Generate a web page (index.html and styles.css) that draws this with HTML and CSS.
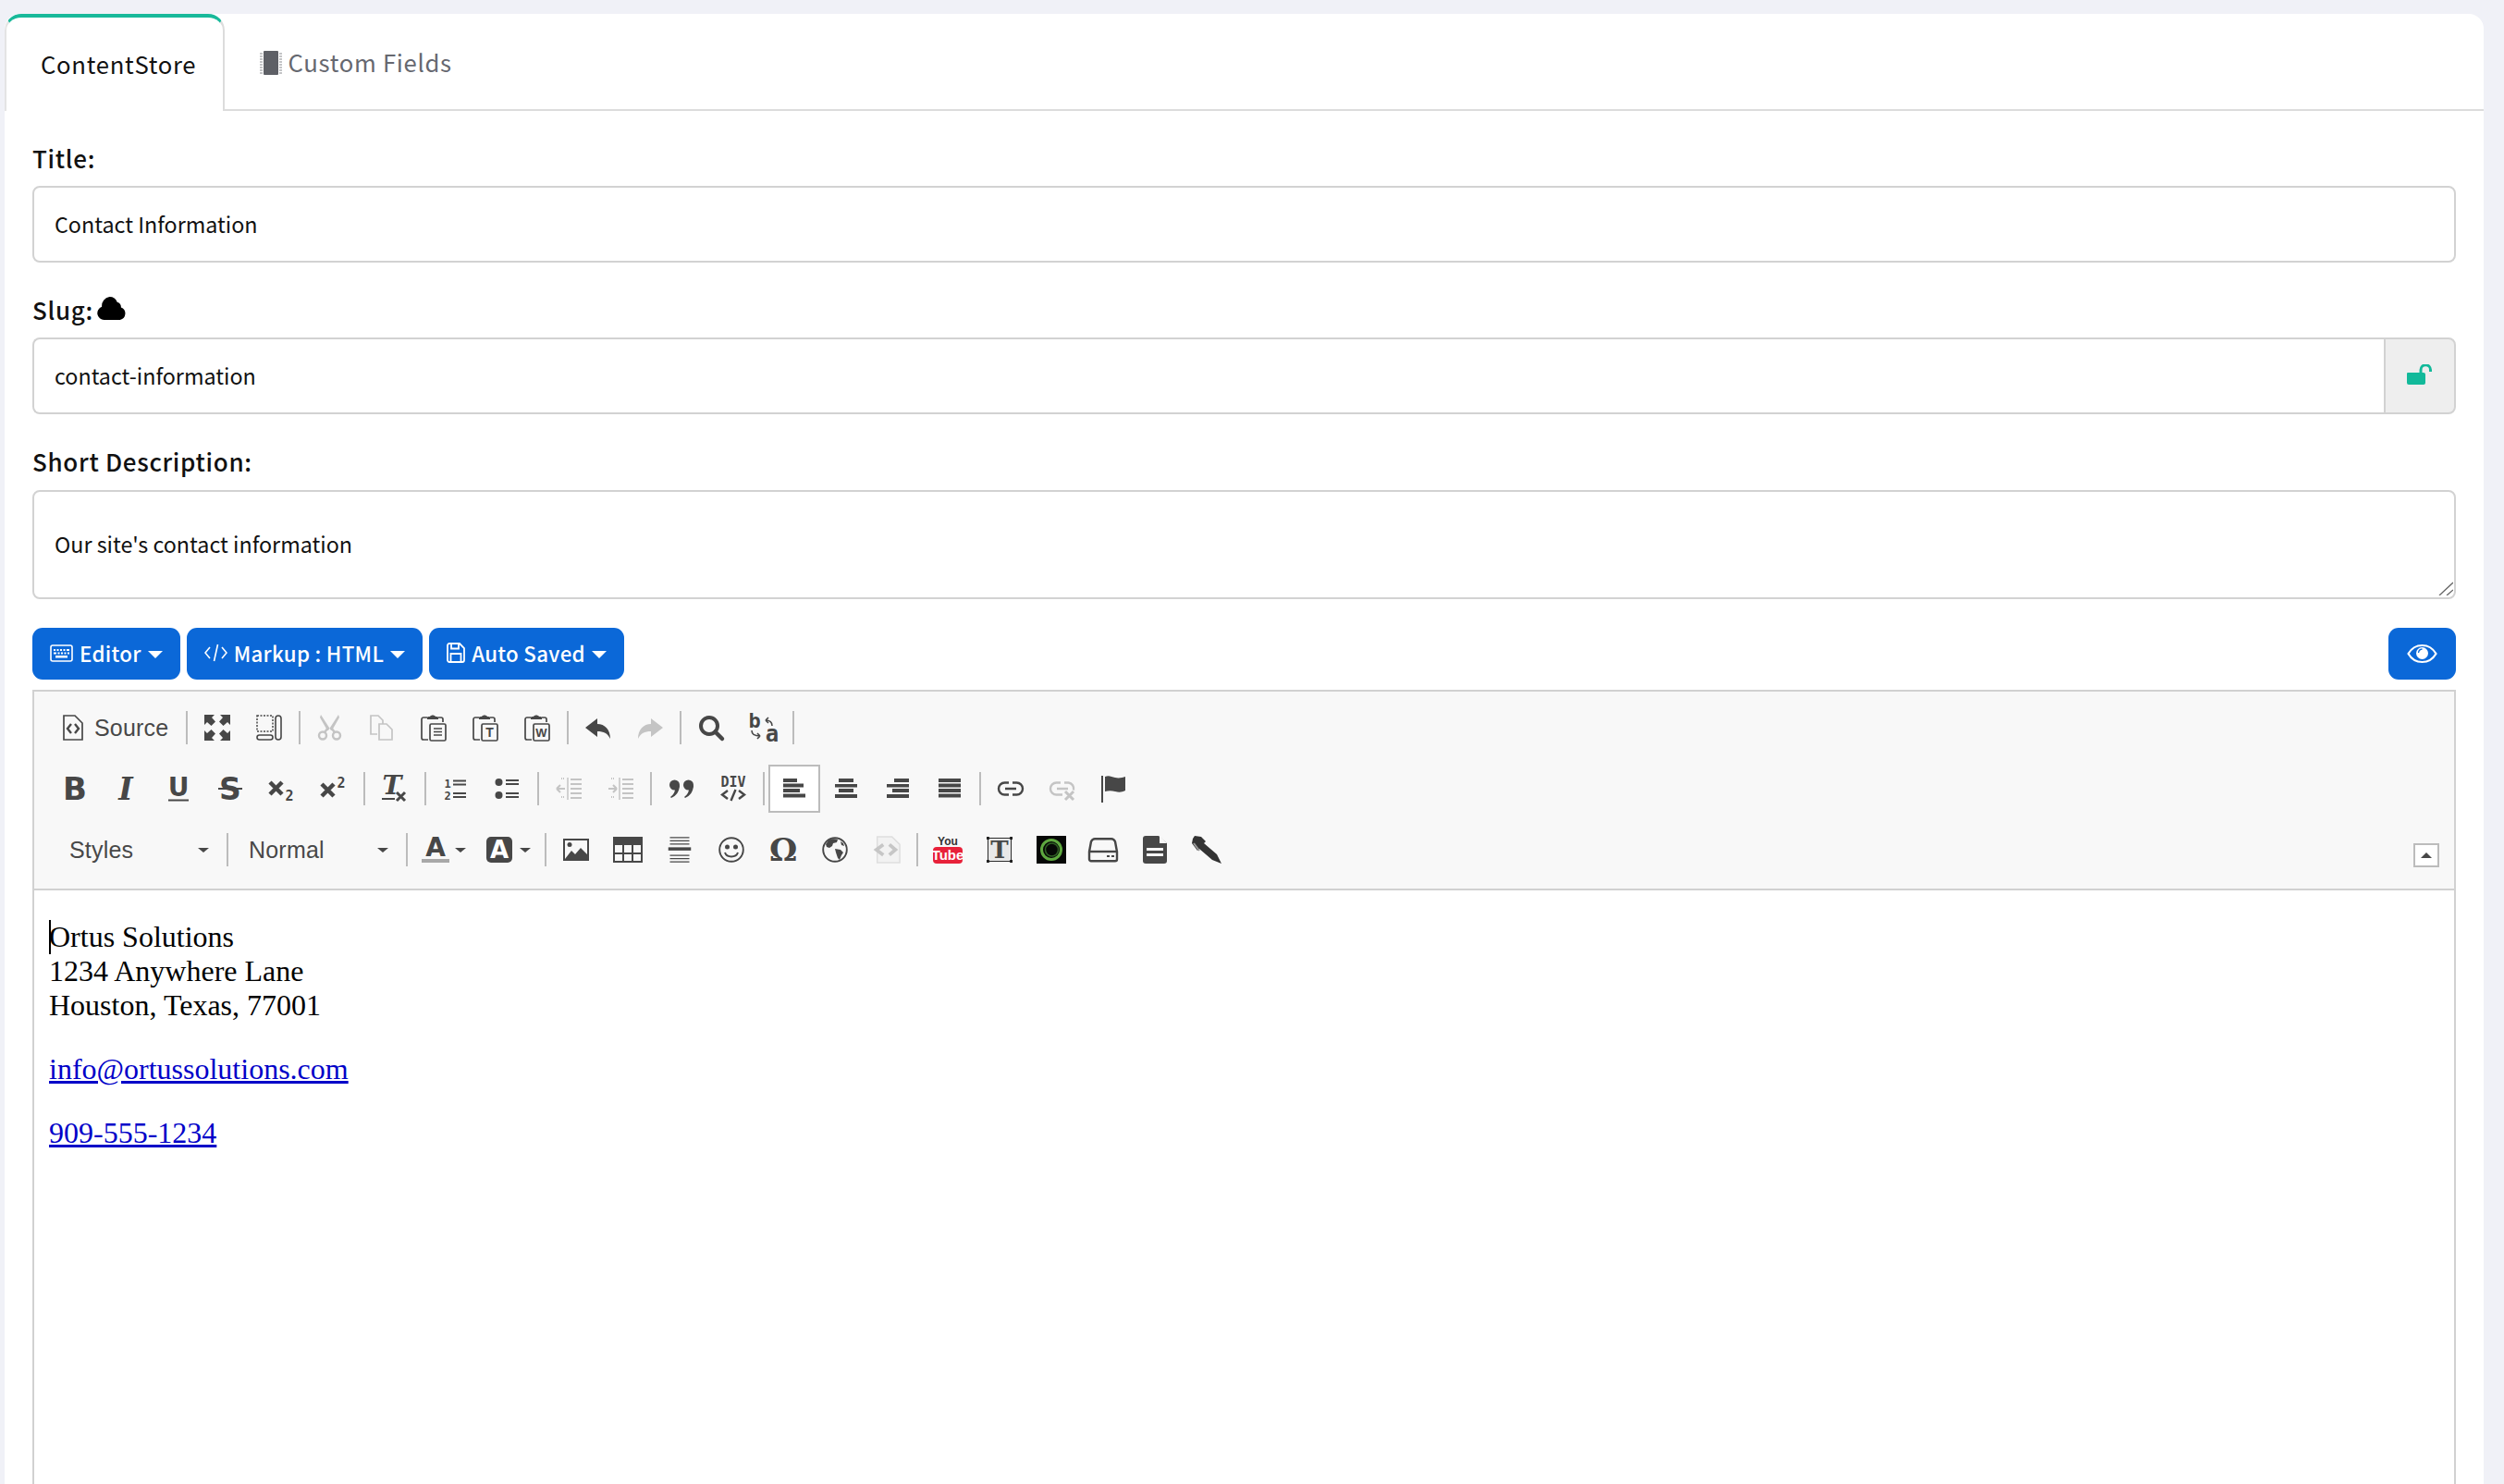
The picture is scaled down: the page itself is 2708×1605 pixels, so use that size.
FILE: index.html
```html
<!DOCTYPE html>
<html lang="en">
<head>
<meta charset="UTF-8">
<title>ContentStore - Contact Information</title>
<link rel="stylesheet" href="styles.css">
</head>
<body>
<div class="card">
  <div class="tabs">
    <a class="tab active">ContentStore</a>
    <a class="tab">
      <svg class="chip" viewBox="0 0 24 26"><path d="M4 1a1 1 0 0 1 1-1h14a1 1 0 0 1 1 1v24a1 1 0 0 1-1 1H5a1 1 0 0 1-1-1z"/><path d="M0 3h3M0 6h3M0 9h3M0 12h3M0 15h3M0 18h3M0 21h3M0 24h3M21 3h3M21 6h3M21 9h3M21 12h3M21 15h3M21 18h3M21 21h3M21 24h3" stroke="#8a8b90" stroke-width="1.200"/></svg>
      Custom Fields
    </a>
  </div>

  <div class="form">
    <label class="field-label">Title:</label>
    <input class="field" value="Contact Information">

    <label class="field-label">Slug:
      <svg class="cloud" viewBox="0 0 30 24"><path d="M7 24a7 7 0 0 1-2.400-13.600A9.500 9.500 0 0 1 12.500 0a8.500 8.500 0 0 1 8 5.500 5.500 5.500 0 0 1 4 5.500A6.800 6.800 0 0 1 23.500 24z"/></svg>
    </label>
    <div class="input-group">
      <input class="field" value="contact-information">
      <span class="addon">
        <svg viewBox="0 0 28 22"><path d="M1 9h17a2 2 0 0 1 2 2v9a2 2 0 0 1-2 2H2a2 2 0 0 1-2-2V10a1 1 0 0 1 1-1z"/><path d="M15 10V6a5 5 0 0 1 10.500 0v2" fill="none" stroke="currentColor" stroke-width="3"/></svg>
      </span>
    </div>

    <label class="field-label">Short Description:</label>
    <div class="area-wrap">
      <textarea class="field area">Our site's contact information</textarea>
      <svg class="grip" viewBox="0 0 16 15"><path d="M1 15L16 1M9 15l7-6" stroke="#666" stroke-width="1.300"/></svg>
    </div>

    <div class="btn-row">
      <a class="btn">
        <svg width="25" height="19" viewBox="0 0 25 19"><rect x="1" y="1" width="23" height="17" rx="2" fill="none" stroke="#fff" stroke-width="1.600"/><path d="M4 5h2v2H4zM7.500 5h2v2h-2zM11 5h2v2h-2zM14.500 5h2v2h-2zM18 5h3v2h-3zM4 8.500h3v2H4zM8.500 8.500h2v2h-2zM12 8.500h2v2h-2zM15.500 8.500h2v2h-2zM19 8.500h2v2h-2zM6 12h13v2.500H6z" fill="#fff"/></svg>
        Editor <i class="caret-down"></i>
      </a>
      <a class="btn">
        <svg width="25" height="20" viewBox="0 0 25 20"><path d="M6 4l-5 6 5 6M19 4l5 6-5 6M14.500 1l-4 18" fill="none" stroke="#fff" stroke-width="1.600"/></svg>
        Markup : HTML <i class="caret-down"></i>
      </a>
      <a class="btn">
        <svg width="20" height="22" viewBox="0 0 20 22"><path d="M1 3a2 2 0 0 1 2-2h11l5 5v13a2 2 0 0 1-2 2H3a2 2 0 0 1-2-2zM5 1.500v5h8v-5M4.500 21v-9h11v9" fill="none" stroke="#fff" stroke-width="1.800"/></svg>
        Auto Saved <i class="caret-down"></i>
      </a>
      <a class="btn btn-eye">
        <svg width="33" height="22" viewBox="0 0 33 22"><path d="M1.500 11C5 5 10 2 16.500 2S28 5 31.500 11C28 17 23 20 16.500 20S5 17 1.500 11z" fill="none" stroke="#fff" stroke-width="2.200"/><circle cx="16.500" cy="10.500" r="6.500" fill="#fff"/><path d="M12.500 10a4.500 4.500 0 0 1 4-4" fill="none" stroke="#0b68d8" stroke-width="1.300"/></svg>
      </a>
    </div>

    <div class="editor">
      <div class="toolbar">
        <div class="tool-row">
          <a class="tool tool-source">
            <svg width="22" height="28" viewBox="0 0 22 28"><path d="M1 1h12l8 8v18H1z" fill="none" stroke="#474747" stroke-width="1.700"/><path d="M9 10l-4 5 4 5M13 10l4 5-4 5" fill="none" stroke="#474747" stroke-width="2.400"/></svg>
            <span>Source</span>
          </a>
          <i class="sep"></i>
          <a class="tool"><svg class="ic" viewBox="0 0 28 28"><path d="M0 0h11L8 3l4 4.500L7.500 12 3 8l-3 3zM28 0H17l3 3-4 4.500 4.500 4.500L25 8l3 3zM0 28h11l-3-3 4-4.500L7.500 16 3 20l-3-3zM28 28H17l3-3-4-4.500 4.500-4.500L25 20l3-3z"/></svg></a>
          <a class="tool"><svg class="ic" viewBox="0 0 28 28"><path d="M1 1h17v17H1z" fill="none" stroke="currentColor" stroke-width="1.500" stroke-dasharray="2 1.500"/><rect x="1" y="22" width="17" height="5" rx="2.500" fill="none" stroke="currentColor" stroke-width="1.600"/><rect x="21" y="1" width="6" height="26" rx="3" fill="none" stroke="currentColor" stroke-width="1.600"/></svg></a>
          <i class="sep"></i>
          <a class="tool off"><svg class="ic" viewBox="0 0 28 28"><path d="M4 0l11 17h-4L3 3zM23 0L12 17h4L24 3z"/><circle cx="6" cy="22.500" r="4" fill="none" stroke="currentColor" stroke-width="2.400"/><circle cx="21" cy="22.500" r="4" fill="none" stroke="currentColor" stroke-width="2.400"/><path d="M8 19l4-5M19 19l-4-5" stroke="currentColor" stroke-width="2.400"/></svg></a>
          <a class="tool off"><svg class="ic" viewBox="0 0 28 28"><path d="M9 21H2V1h8l5 5v4M11 10h8l6 6v11H11z" fill="none" stroke="currentColor" stroke-width="1.700"/></svg></a>
          <a class="tool"><svg class="ic" viewBox="0 0 28 28"><use href="#clip"/><path d="M14 15h9M14 18.500h9M14 22h9" stroke="currentColor" stroke-width="1.500"/></svg></a>
          <a class="tool"><svg class="ic" viewBox="0 0 28 28"><use href="#clip"/><text x="18.500" y="24" class="ic-text" font-size="14">T</text></svg></a>
          <a class="tool"><svg class="ic" viewBox="0 0 28 28"><use href="#clip"/><text x="18.500" y="24" class="ic-text" font-size="13">W</text></svg></a>
          <i class="sep"></i>
          <a class="tool"><svg class="ic" viewBox="0 0 28 28"><path d="M0 14L13 4v6c8 0 14 6 14 16-3-6-7-8-14-8v6z"/></svg></a>
          <a class="tool off"><svg class="ic" viewBox="0 0 28 28"><path d="M28 14L15 4v6C7 10 1 16 1 26c3-6 7-8 14-8v6z"/></svg></a>
          <i class="sep"></i>
          <a class="tool"><svg class="ic" viewBox="0 0 28 28"><circle cx="12" cy="12" r="9" fill="none" stroke="currentColor" stroke-width="4"/><path d="M18.500 18.500L26 26" stroke="currentColor" stroke-width="4.500" stroke-linecap="round"/></svg></a>
          <a class="tool"><svg class="ic" viewBox="0 0 28 28"><text x="5" y="14" class="ic-mono" font-size="22">b</text><text x="24" y="29" class="ic-mono" font-size="24">a</text><path d="M24 12c0-4-2-6-7-6M17 6l3-3M17 6l3 3M2 17c0 4 2 6 9 6M11 23l-3-3M11 23l-3 3" fill="none" stroke="currentColor" stroke-width="1.600"/></svg></a>
          <i class="sep"></i>
        </div>

        <div class="tool-row">
          <a class="tool"><svg class="ic" viewBox="0 0 28 28"><text x="14" y="26" class="ic-bold" font-size="34">B</text></svg></a>
          <a class="tool"><svg class="ic" viewBox="0 0 28 28"><text x="13" y="26" class="ic-serif" font-size="33">I</text></svg></a>
          <a class="tool"><svg class="ic" viewBox="0 0 28 28"><text x="14" y="22" class="ic-bold" font-size="28">U</text><path d="M3 26.500h22" stroke="currentColor" stroke-width="2"/></svg></a>
          <a class="tool"><svg class="ic" viewBox="0 0 28 28"><text x="14" y="26" class="ic-bold" font-size="33">S</text><path d="M1 14h26" stroke="currentColor" stroke-width="2"/></svg></a>
          <a class="tool"><svg class="ic" viewBox="0 0 28 28"><path d="M1 7l13 13M14 7L1 20" stroke="currentColor" stroke-width="4.500"/><text x="22" y="27" class="ic-mono" font-size="15">2</text></svg></a>
          <a class="tool"><svg class="ic" viewBox="0 0 28 28"><path d="M1 9l13 13M14 9L1 22" stroke="currentColor" stroke-width="4.500"/><text x="22" y="13" class="ic-mono" font-size="15">2</text></svg></a>
          <i class="sep"></i>
          <a class="tool"><svg class="ic" viewBox="0 0 28 28"><text x="11" y="20" class="ic-serif" font-size="28">T</text><path d="M0 25h14" stroke="currentColor" stroke-width="2"/><path d="M16 18l9 9M25 18l-9 9" stroke="currentColor" stroke-width="3"/></svg></a>
          <i class="sep"></i>
          <a class="tool"><svg class="ic" viewBox="0 0 28 28"><text x="5" y="13" class="ic-mono" font-size="12">1</text><text x="5" y="26" class="ic-mono" font-size="12">2</text><path d="M11 5.500h14M11 9.500h14M11 19h14M11 23h14" stroke="currentColor" stroke-width="2"/></svg></a>
          <a class="tool"><svg class="ic" viewBox="0 0 28 28"><circle cx="4.500" cy="7" r="4"/><circle cx="4.500" cy="21" r="4"/><path d="M12 5h14M12 9h14M12 19h14M12 23h14" stroke="currentColor" stroke-width="2"/></svg></a>
          <i class="sep"></i>
          <a class="tool off"><svg class="ic" viewBox="0 0 28 28"><path d="M16 4h12M16 9h12M16 14h12M16 19h12M16 24h12M1 14h9M1 14l4-4M1 14l4 4" fill="none" stroke="currentColor" stroke-width="2"/><path d="M13 2v24" stroke="currentColor" stroke-width="1.500"/><path d="M6 3h3M6 23h3" stroke="currentColor" stroke-width="2" stroke-dasharray="1 1"/></svg></a>
          <a class="tool off"><svg class="ic" viewBox="0 0 28 28"><path d="M16 4h12M16 9h12M16 14h12M16 19h12M16 24h12M1 14h9M10 14l-4-4M10 14l-4 4" fill="none" stroke="currentColor" stroke-width="2"/><path d="M13 2v24" stroke="currentColor" stroke-width="1.500"/><path d="M4 3h3M4 23h3" stroke="currentColor" stroke-width="2" stroke-dasharray="1 1"/></svg></a>
          <i class="sep"></i>
          <a class="tool"><svg class="ic" viewBox="0 0 28 28"><circle cx="6.500" cy="10" r="5.500"/><path d="M12 10c0 7-4 12-9 14l-1-1c4-3 5-6 5-9z"/><circle cx="21.500" cy="10" r="5.500"/><path d="M27 10c0 7-4 12-9 14l-1-1c4-3 5-6 5-9z"/></svg></a>
          <a class="tool"><svg class="ic" viewBox="0 0 28 28"><text x="14" y="12" class="ic-mono" font-size="15">DIV</text><path d="M8 16l-6 4.500 6 4.500M20 16l6 4.500-6 4.500M16.500 15l-5 12" fill="none" stroke="currentColor" stroke-width="2.400"/></svg></a>
          <i class="sep"></i>
          <a class="tool tool-on"><svg class="ic" viewBox="0 0 28 28"><path d="M2 3h15v4H2zM2 8.500h22v4H2zM2 14h18v4H2zM2 19.500h24v4H2z"/></svg></a>
          <a class="tool"><svg class="ic" viewBox="0 0 28 28"><path d="M6 3h16v4H6zM2 9h24v3.500H2zM6 14h16v4H6zM2 20h24v4H2z"/></svg></a>
          <a class="tool"><svg class="ic" viewBox="0 0 28 28"><path d="M10 3h16v4H10zM2 9h24v3.500H2zM8 14h18v4H8zM2 20h24v4H2z"/></svg></a>
          <a class="tool"><svg class="ic" viewBox="0 0 28 28"><path d="M2 3h24v4H2zM2 8.500h24v4H2zM2 14h24v4H2zM2 19.500h24v4H2z"/></svg></a>
          <i class="sep"></i>
          <a class="tool"><svg class="ic" viewBox="0 0 28 28"><path d="M12 7.500H7.500a6.500 6.500 0 0 0 0 13H12M16 7.500h4.500a6.500 6.500 0 0 1 0 13H16M8 14h12" fill="none" stroke="currentColor" stroke-width="2.400"/></svg></a>
          <a class="tool off"><svg class="ic" viewBox="0 0 28 28"><path d="M12 7.500H7.500a6.500 6.500 0 0 0 0 13H14M16 7.500h4.500a6.500 6.500 0 0 1 5.500 8M8 14h12" fill="none" stroke="currentColor" stroke-width="2.400"/><path d="M17 17l9 9M26 17l-9 9" stroke="currentColor" stroke-width="3"/></svg></a>
          <a class="tool"><svg class="ic" viewBox="0 0 28 28"><path d="M1 0v29" stroke="currentColor" stroke-width="2"/><path d="M4 1c4-2 7 0 11 1s8 0 11-1v15c-4 2-7 2-11 1s-7-1-11 0z"/></svg></a>
        </div>

        <div class="tool-row">
          <a class="combo combo-styles"><span>Styles</span><i class="arrow"></i></a>
          <i class="sep"></i>
          <a class="combo combo-format"><span>Normal</span><i class="arrow"></i></a>
          <i class="sep"></i>
          <a class="tool tool-color"><svg class="ic" viewBox="0 0 30 28"><text x="15" y="21" class="ic-bold" font-size="28">A</text><rect y="24" width="30" height="4" fill="#a8a8a8"/></svg><i class="arrow"></i></a>
          <a class="tool tool-color tool-bg"><svg class="ic" viewBox="0 0 28 28"><rect width="28" height="28" rx="5"/><text x="14" y="23" class="ic-bold ic-white" font-size="26">A</text></svg><i class="arrow"></i></a>
          <i class="sep"></i>
          <a class="tool"><svg class="ic" viewBox="0 0 28 24"><rect x="1" y="1" width="26" height="22" fill="none" stroke="currentColor" stroke-width="2"/><circle cx="7" cy="6.500" r="2.500"/><path d="M2 22l7-9 4 4 6-7 7 7v5z"/></svg></a>
          <a class="tool"><svg class="ic tall" viewBox="0 0 32 28"><path d="M0 0h32v28H0zM2 9v8h8V9zm10 0v8h8V9zm10 0v8h8V9zM2 19v7h8v-7zm10 0v7h8v-7zm10 0v7h8v-7z" fill-rule="evenodd"/></svg></a>
          <a class="tool"><svg class="ic" viewBox="0 0 28 32"><path d="M2 1h24M2 5h24M2 9h24M2 23h24M2 27h24M2 31h24" stroke="currentColor" stroke-width="1.700"/><path d="M0 13h28v4H0z"/></svg></a>
          <a class="tool"><svg class="ic" viewBox="0 0 28 28"><circle cx="14" cy="14" r="12.800" fill="none" stroke="currentColor" stroke-width="1.900"/><circle cx="9.500" cy="11" r="2.500"/><circle cx="18.500" cy="11" r="2.500"/><path d="M7 17c2 6 12 6 14 0" fill="none" stroke="currentColor" stroke-width="2"/></svg></a>
          <a class="tool"><svg class="ic" viewBox="0 0 28 28"><text x="14" y="26" class="ic-serif ic-omega" font-size="34">Ω</text></svg></a>
          <a class="tool"><svg class="ic" viewBox="0 0 28 28"><circle cx="14" cy="14" r="12.800" fill="none" stroke="currentColor" stroke-width="1.900"/><path d="M7 4c3-2 7-2 10-1l-1 3-4 1-1 3-3 2-3-1-1-3zM14 13l6 1 3 3-2 3-2 5-2-2-2-6z"/><path d="M20 5l3 2 1 3-3-1z"/></svg></a>
          <a class="tool"><svg class="ic tall" viewBox="0 0 32 32"><path d="M5 1h17l9 9v21H5z" fill="#f2f2f2" stroke="#dedede" stroke-width="1.600"/><path d="M12 10l-8 6 8 6M19 10l7 6-7 6" fill="none" stroke="#c6c6c6" stroke-width="4"/></svg></a>
          <i class="sep"></i>
          <a class="tool"><svg class="ic tall" viewBox="0 0 32 30"><rect y="12" width="32" height="18" rx="4" fill="#e8213a"/><text x="16" y="10" class="ic-bold ic-yt" font-size="12">You</text><text x="16" y="26" class="ic-bold ic-white ic-yt" font-size="15">Tube</text></svg></a>
          <a class="tool"><svg class="ic" viewBox="0 0 29 29"><rect x="1.500" y="1.500" width="26" height="26" fill="#e8e8e8" stroke="#222" stroke-width="1"/><path d="M0 0h3v3H0zM26 0h3v3h-3zM0 26h3v3H0zM26 26h3v3h-3z" fill="#222"/><text x="14.500" y="24" class="ic-serif ic-upright" font-size="27" fill="#111">T</text></svg></a>
          <a class="tool"><svg class="ic tall" viewBox="0 0 32 30"><rect width="32" height="30" fill="#060806"/><circle cx="16" cy="15" r="10.500" fill="none" stroke="#5ea83f" stroke-width="3"/><circle cx="16.500" cy="15" r="7" fill="none" stroke="#2f5f24" stroke-width="1.500"/></svg></a>
          <a class="tool"><svg class="ic tall" viewBox="0 0 32 26"><path d="M7 1.200h18c2 0 3 1 4 3l2 11v8a2 2 0 0 1-2 2H3a2 2 0 0 1-2-2v-8L3 4.200c1-2 2-3 4-3z" fill="none" stroke="currentColor" stroke-width="2.400"/><path d="M1 15h30" stroke="currentColor" stroke-width="2.400"/><path d="M20 19h3v2h-3zM25 19h3v2h-3z"/></svg></a>
          <a class="tool"><svg class="ic tall-doc" viewBox="0 0 26 30"><path d="M3 0h14l9 8v19a3 3 0 0 1-3 3H3a3 3 0 0 1-3-3V3a3 3 0 0 1 3-3z"/><path d="M4 13h18v3H4zM4 19h18v3H4z" fill="#f7f7f7"/><path d="M18 0l8 8h-8z" fill="#f7f7f7"/></svg></a>
          <a class="tool"><svg class="ic tall" viewBox="0 0 32 30"><path d="M3 0l7 1 5 5-2 2 14 12 5 10-10-4L8 14l-2 2-6-8 1-5z" fill="#333"/><path d="M2 8l6 8" stroke="#999" stroke-width="2"/></svg></a>
        </div>

        <a class="collapser"><i></i></a>
      </div>

      <div class="content">
        <p><i class="text-caret"></i>Ortus Solutions<br>1234 Anywhere Lane<br>Houston, Texas, 77001</p>
        <p><a href="#">info@ortussolutions.com</a></p>
        <p><a href="#">909-555-1234</a></p>
      </div>
    </div>
  </div>
</div>

<svg class="defs" width="0" height="0">
  <defs>
    <g id="clip">
      <path d="M7 3H3a2 2 0 0 0-2 2v20a2 2 0 0 0 2 2h5M19 3h3a2 2 0 0 1 2 2v3" fill="none" stroke="currentColor" stroke-width="1.700"/>
      <path d="M7 5V3c0-1 1-1 3-1 1-2 5-2 6 0 2 0 3 0 3 1v2z"/>
      <rect x="10" y="10" width="17" height="18" rx="1.500" fill="none" stroke="currentColor" stroke-width="1.700"/>
    </g>
  </defs>
</svg>
</body>
</html>
```

FILE: styles.css
```css
html, body {
    margin: 0;
    padding: 0;
    height: 1605px;
    overflow: hidden;
}
body {
    background-color: #f0f1f7;
    font-family: "Noto Sans CJK SC", "Noto Sans", sans-serif;
    color: #111;
}
.defs {
    position: absolute;
}

/* card + tabs */
.card {
    margin: 15px 22px 0 5px;
    height: 1590px;
    background-color: #fff;
    border-radius: 16px 16px 0 0;
    overflow: hidden;
}
.tabs {
    display: flex;
    height: 105px;
    box-sizing: border-box;
    border-bottom: 2px solid #dcdcdc;
}
.tab {
    width: 243px;
    box-sizing: border-box;
    padding: 30px 0 0 38px;
    font-size: 25.700px;
    letter-spacing: 0.7px;
    color: #666870;
    white-space: nowrap;
    line-height: 44px;
}
.tab.active {
    width: 238px;
    height: 105px;
    margin-left: 0;
    padding: 28px 0 0 37px;
    background-color: #fff;
    color: #111;
    border-top: 4px solid #18b99a;
    border-right: 2px solid #dcdcdc;
    border-left: 2px solid #e4e4e4;
    border-radius: 18px 18px 0 0;
}
.chip {
    width: 24px;
    height: 26px;
    fill: #5e6066;
    vertical-align: -3px;
    margin-right: 0;
}

/* form */
.form {
    padding: 33px 30px 0 30px;
}
.field-label {
    display: block;
    height: 36px;
    line-height: 36px;
    margin-bottom: 12px;
    font-size: 26px;
    font-weight: 500;
    letter-spacing: 0.7px;
    color: #111;
}
.cloud {
    width: 32px;
    height: 25px;
    margin-left: -3px;
    fill: #000;
    vertical-align: 0;
}
.field {
    display: block;
    width: 100%;
    height: 83px;
    box-sizing: border-box;
    margin-bottom: 33px;
    padding: 0 22px 1px;
    background-color: #fff;
    border: 2px solid #d2d2d2;
    border-radius: 8px;
    font-family: inherit;
    font-size: 23.300px;
    color: #111;
}
.input-group {
    display: flex;
    height: 83px;
    margin-bottom: 33px;
}
.input-group .field {
    border-right: 0;
    border-radius: 8px 0 0 8px;
    flex: 1;
    margin: 0;
}
.addon {
    width: 78px;
    box-sizing: border-box;
    display: flex;
    align-items: center;
    justify-content: center;
    background-color: #eeeeee;
    border: 2px solid #d2d2d2;
    border-radius: 0 8px 8px 0;
    color: #12b99a;
}
.addon svg {
    width: 28px;
    height: 22px;
    fill: currentColor;
    margin-top: -3px;
}
.area-wrap {
    position: relative;
    margin: 13px 0 31px;
}
.area {
    height: 118px;
    margin: 0;
    padding: 38px 22px 0;
    line-height: 36px;
    resize: none;
}
.grip {
    position: absolute;
    right: 3px;
    bottom: 4px;
    width: 16px;
    height: 15px;
}

/* buttons above the editor */
.btn-row {
    display: flex;
    gap: 7px;
    margin-bottom: 11px;
}
.btn {
    display: flex;
    align-items: center;
    gap: 7px;
    height: 56px;
    padding: 0 19px 2px;
    box-sizing: border-box;
    background-color: #0b68d8;
    border-radius: 11px;
    color: #fff;
    font-size: 22.300px;
    font-weight: 500;
    letter-spacing: 0.3px;
    white-space: nowrap;
}
.btn-eye {
    margin-left: auto;
    padding: 0 20px;
}
.caret-down {
    width: 0;
    height: 0;
    border-top: 8px solid #fff;
    border-left: 8px solid transparent;
    border-right: 8px solid transparent;
    margin-top: 3px;
}

/* ckeditor look */
.editor {
    border: 2px solid #d1d1d1;
    border-bottom: 0;
    height: 900px;
}
.toolbar {
    position: relative;
    padding: 6px 0 9px 16px;
    background-color: #f8f8f8;
    border-bottom: 2px solid #d1d1d1;
    color: #474747;
}
.tool-row {
    display: flex;
    align-items: center;
    height: 66px;
}
.tool {
    display: flex;
    align-items: center;
    justify-content: center;
    width: 56px;
    height: 52px;
    box-sizing: border-box;
    flex: none;
}
.tool.off {
    color: #c4c4c4;
}
.tool-on {
    background-color: #fff;
    border: 2px solid #bcbcbc;
}
.tool-source {
    width: 144px;
    justify-content: flex-start;
    padding-left: 15px;
    gap: 12px;
    font-family: "Liberation Sans", Arial, sans-serif;
    font-size: 25px;
    letter-spacing: 0.2px;
    color: #484848;
}
.ic {
    width: 28px;
    height: 28px;
    fill: currentColor;
    overflow: visible;
}
.ic.tall {
    width: 32px;
    height: 30px;
}
.ic.tall-doc {
    width: 26px;
    height: 30px;
}
.ic-text, .ic-mono, .ic-bold, .ic-serif {
    fill: currentColor;
    text-anchor: middle;
}
.ic-text {
    font-family: "Liberation Sans", sans-serif;
    font-weight: 700;
}
.ic-mono {
    font-family: "DejaVu Sans Mono", monospace;
    font-weight: 700;
}
.ic-bold {
    font-family: "DejaVu Sans", sans-serif;
    font-weight: 700;
}
.ic-serif {
    font-family: "DejaVu Serif", serif;
    font-weight: 700;
    font-style: italic;
}
.ic-upright, .ic-omega {
    font-style: normal;
}
.ic-white {
    fill: #fff;
}
.ic-yt {
    font-family: "Liberation Sans", sans-serif;
    fill: #333;
}
.ic-yt.ic-white {
    fill: #fff;
}
.sep {
    flex: none;
    width: 2px;
    height: 36px;
    margin: 0 4px;
    background-color: #bcbcbc;
}
.combo {
    display: flex;
    align-items: center;
    justify-content: space-between;
    box-sizing: border-box;
    height: 52px;
    padding-right: 15px;
    font-family: "Liberation Sans", Arial, sans-serif;
    font-size: 25px;
    letter-spacing: 0.2px;
    color: #484848;
    flex: none;
}
.combo-styles {
    width: 188px;
    padding-left: 22px;
}
.combo-format {
    width: 184px;
    padding-left: 18px;
}
.arrow {
    display: block;
    width: 0;
    height: 0;
    border-top: 5px solid #474747;
    border-left: 6px solid transparent;
    border-right: 6px solid transparent;
}
.tool-color {
    width: 70px;
    justify-content: flex-start;
    padding-left: 11px;
    gap: 6px;
}
.tool-color .ic {
    width: 30px;
}
.tool-bg {
    padding-left: 11px;
    gap: 8px;
}
.tool-bg .ic {
    width: 28px;
}
.collapser {
    position: absolute;
    right: 16px;
    bottom: 23px;
    width: 28px;
    height: 26px;
    box-sizing: border-box;
    display: flex;
    align-items: center;
    justify-content: center;
    background-color: #fff;
    border: 2px solid #bcbcbc;
}
.collapser i {
    width: 0;
    height: 0;
    border-bottom: 6px solid #474747;
    border-left: 6px solid transparent;
    border-right: 6px solid transparent;
}
.content {
    padding: 32px 16px;
    font-family: "Liberation Serif", "Times New Roman", serif;
    font-size: 32px;
    line-height: 37px;
    color: #000;
}
.content p {
    margin: 0 0 32px;
}
.content a {
    color: #0000c8;
}
.text-caret {
    display: inline-block;
    width: 2px;
    height: 37px;
    margin-right: -2px;
    background-color: #000;
    vertical-align: top;
}
```
